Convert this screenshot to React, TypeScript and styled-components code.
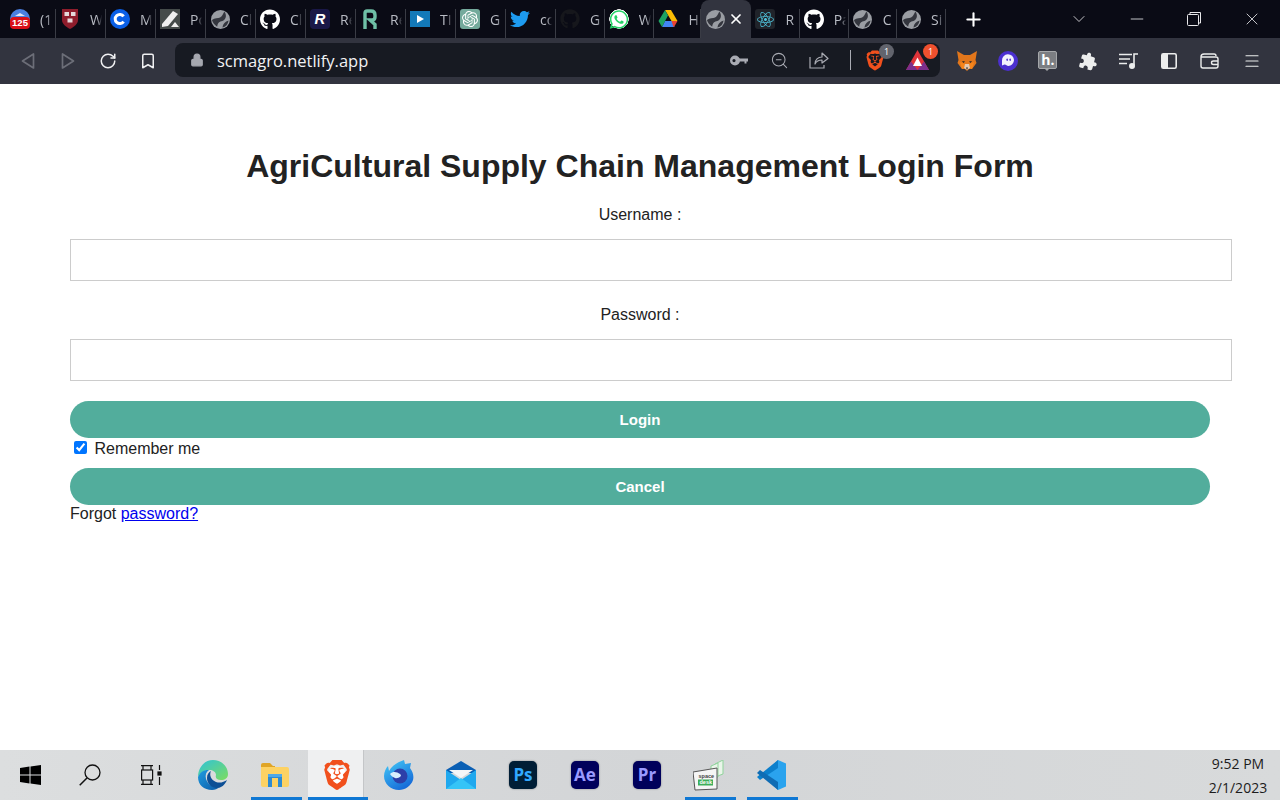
import React from "react";
import styled, { createGlobalStyle } from "styled-components";
import { FaGithub, FaTwitter, FaWhatsapp, FaReact } from "react-icons/fa";
import { SiOpenai, SiBrave } from "react-icons/si";
import { Bookmark, ChevronDown, Lock, Menu, Minus, Plus, RotateCw, X, ZoomOut } from "lucide-react";

const GlobalStyle = createGlobalStyle`
  html, body { margin: 0; padding: 0; background: #fff; }
  body { font-family: "Liberation Sans", Arial, sans-serif; color: #222; overflow: hidden; }
`;

const Screen = styled.div`
  width: 1280px;
  height: 800px;
  display: flex;
  flex-direction: column;
  overflow: hidden;
`;

/* browser chrome */
const TabStrip = styled.div`
  height: 38px;
  flex: none;
  display: flex;
  padding-left: 6px;
  background: #0a0b15;
`;

const Tab = styled.div<{ $w: number; $active?: boolean }>`
  width: ${(p) => p.$w}px;
  flex: none;
  box-sizing: border-box;
  position: relative;
  display: flex;
  align-items: center;
  gap: 10px;
  padding: 0 4px;
  overflow: hidden;
  background: ${(p) => (p.$active ? "#32343f" : "transparent")};
  border-radius: ${(p) => (p.$active ? "8px 8px 0 0" : "0")};
  &::after {
    content: "";
    display: ${(p) => (p.$active ? "none" : "block")};
    position: absolute;
    right: 0;
    top: 9px;
    bottom: 0;
    width: 1px;
    background: #3a3c45;
  }
`;

const TabIcon = styled.span`
  width: 20px;
  height: 20px;
  flex: none;
  display: flex;
  align-items: center;
  justify-content: center;
  position: relative;
`;

const TabTitle = styled.span`
  font: 14px "Open Sans", sans-serif;
  color: #b9bcc4;
  white-space: nowrap;
  overflow: hidden;
  width: 12px;
  flex: none;
  mask-image: linear-gradient(90deg, #000 60%, transparent 100%);
`;

const TabClose = styled.span`
  display: flex;
  color: #fff;
  margin-left: -7px;
`;

const StripActions = styled.div`
  flex: 1;
  display: flex;
  align-items: center;
  color: #fff;
`;

const NewTab = styled.span`
  display: flex;
  margin-left: 17px;
  margin-right: 81px;
`;

const WindowButton = styled.span<{ $w: number }>`
  width: ${(p) => p.$w}px;
  display: flex;
  justify-content: center;
  color: #e8e8ea;
`;

const Toolbar = styled.div`
  height: 46px;
  flex: none;
  box-sizing: border-box;
  display: flex;
  align-items: center;
  padding-left: 8px;
  background: #32343f;
`;

const NavButton = styled.span<{ $off?: boolean }>`
  width: 40px;
  flex: none;
  display: flex;
  justify-content: center;
  color: ${(p) => (p.$off ? "#6c6e78" : "#f0f0f2")};
`;

const AddressBar = styled.div`
  width: 765px;
  height: 34px;
  flex: none;
  margin-left: 7px;
  margin-top: -2px;
  box-sizing: border-box;
  display: flex;
  align-items: center;
  padding-left: 15px;
  background: #171a22;
  border-radius: 8px;
  color: #a6a8b0;
`;

const Url = styled.span`
  margin-left: 13px;
  font: 16.5px "Open Sans", sans-serif;
  color: #f1f2f4;
`;

const AddressActions = styled.div`
  margin-left: auto;
  display: flex;
  align-items: center;
`;

const AddressIcon = styled.span`
  width: 40px;
  display: flex;
  justify-content: center;
  color: #a9abb3;
`;

const Divider = styled.span`
  width: 1px;
  height: 20px;
  margin: 0 14px 0 11px;
  background: #a9abb3;
`;

const Shield = styled.span<{ $gap?: number }>`
  position: relative;
  width: ${(p) => (p.$gap ? 24 : 20)}px;
  height: 22px;
  margin-left: ${(p) => p.$gap ?? 0}px;
  margin-right: ${(p) => (p.$gap ? 11 : 0)}px;
  display: flex;
  align-items: center;
  justify-content: center;
`;

const Badge = styled.span<{ $bg: string }>`
  position: absolute;
  top: -5px;
  right: -9px;
  width: 15px;
  height: 15px;
  border-radius: 50%;
  background: ${(p) => p.$bg};
  color: #fff;
  font: 9px/15px "Open Sans", sans-serif;
  text-align: center;
`;

const Extensions = styled.div`
  margin-left: 7px;
  display: grid;
  grid-template-columns: repeat(8, 40.4px);
  justify-items: center;
  align-items: center;
  color: #eceded;
`;

const MenuButton = styled.span`
  display: flex;
  margin-left: 4px;
`;

/* the page itself */
const Page = styled.main`
  flex: 1;
  background: #fff;
`;

const Title = styled.h1`
  margin: 64px 0 0;
  font-size: 32px;
  line-height: 37px;
  font-weight: 700;
  text-align: center;
  color: #222;
`;

const Form = styled.form`
  width: 1140px;
  margin: 0 auto;
  font-size: 16px;
  line-height: 18px;
`;

const FieldLabel = styled.label<{ $top: number }>`
  display: block;
  margin-top: ${(p) => p.$top}px;
  text-align: center;
  color: #222;
`;

const TextInput = styled.input`
  display: block;
  width: 100%;
  height: 20px;
  margin-top: 15px;
  padding: 10px;
  border: 1px solid #ccc;
  background: #fff;
  outline: none;
`;

const SubmitButton = styled.button<{ $top: number }>`
  display: block;
  width: 100%;
  height: 37px;
  margin-top: ${(p) => p.$top}px;
  border: 0;
  border-radius: 19px;
  background: #52ad9c;
  color: #fff;
  font: bold 15px "Liberation Sans", Arial, sans-serif;
`;

const RememberRow = styled.label`
  display: block;
  line-height: 20px;
  color: #222;
  input {
    vertical-align: 0;
    margin: 3px 3px 3px 4px;
  }
`;

const ForgotRow = styled.div`
  color: #222;
  a { color: #0000ee; }
`;

/* taskbar */
const Taskbar = styled.footer`
  height: 50px;
  flex: none;
  display: flex;
  background: linear-gradient(90deg, #dcdedf 0%, #d3d5d7 50%, #d8dadb 100%);
`;

const TaskCell = styled.div<{ $w?: number; $open?: boolean; $active?: boolean }>`
  width: ${(p) => p.$w ?? 62}px;
  flex: none;
  position: relative;
  display: flex;
  align-items: center;
  justify-content: center;
  ${(p) =>
    p.$active &&
    `&::before {
      content: "";
      position: absolute;
      left: 2px;
      right: 4px;
      top: 0;
      bottom: 0;
      background: #eff0f1;
      border-right: 1px solid #c4c6c8;
    }`}
  ${(p) =>
    p.$open &&
    `&::after {
      content: "";
      position: absolute;
      left: ${p.$active ? 2 : 7}px;
      right: ${p.$active ? 0 : 4}px;
      bottom: 0;
      height: 3px;
      background: #0f78d4;
    }`}
  & > * { position: relative; z-index: 1; }
`;

const Clock = styled.div`
  margin-left: auto;
  width: 76px;
  padding-right: 4px;
  display: flex;
  flex-direction: column;
  align-items: center;
  gap: 6px;
  padding-top: 5px;
  font: 14px/18px "Open Sans", sans-serif;
  color: #1c1c1c;
`;

const AppSquare = styled.span<{ $bg: string; $fg: string }>`
  width: 28px;
  height: 28px;
  box-sizing: border-box;
  border-radius: 5px;
  background: ${(p) => p.$bg};
  color: ${(p) => p.$fg};
  box-shadow: 0 0 2px rgba(0, 0, 0, 0.4);
  font: 700 17px/27px "Open Sans", sans-serif;
  text-align: center;
`;

const MailBadge = styled.span`
  position: absolute;
  left: 0;
  right: 0;
  bottom: 0;
  height: 12px;
  border-radius: 4px;
  background: #d90f17;
  color: #fff;
  font: 700 9.5px/12px "Liberation Sans", sans-serif;
  text-align: center;
`;

const RepoSquare = styled.span`
  width: 20px;
  height: 20px;
  border-radius: 4px;
  background: #1a1848;
  color: #fff;
  font: italic 700 15px/20px "Liberation Sans", sans-serif;
  text-align: center;
`;

const ChatSquare = styled.span`
  width: 20px;
  height: 20px;
  border-radius: 3px;
  background: #74aa9c;
  display: flex;
  align-items: center;
  justify-content: center;
`;

const ReactSquare = styled.span`
  width: 20px;
  height: 20px;
  border-radius: 3px;
  background: #20232a;
  display: flex;
  align-items: center;
  justify-content: center;
`;

const WhatsAppBox = styled.span`
  width: 20px;
  height: 20px;
  display: flex;
  align-items: center;
  justify-content: center;
  border-radius: 50%;
  background: radial-gradient(circle, #fff 68%, transparent 70%);
`;

const BraveBox = styled.span`
  width: 30px;
  height: 30px;
  display: flex;
  align-items: center;
  justify-content: center;
  background: radial-gradient(circle, #fff 40%, transparent 45%);
`;

const HoneyLogo = styled.span`
  width: 17px;
  height: 16px;
  margin-top: -2px;
  border-radius: 2px;
  border: 1px solid #a5a7aa;
  background: #7c7e83;
  color: #fff;
  font: 700 14px/15px "Open Sans", sans-serif;
  text-align: center;
  position: relative;
  &::after {
    content: "";
    position: absolute;
    left: 6px;
    bottom: -5px;
    border: 2px solid transparent;
    border-top-color: #a5a7aa;
  }
`;

const Globe = () => (
  <svg width="19" height="19" viewBox="0 0 20 20">
    <circle cx="10" cy="10" r="10" fill="#9a9da3" />
    <path d="M14 1.5 C12 5 12 6.5 9.5 8 C7.5 9 4 8.5 1 10.5 C1.5 13 4 16 6.5 17.5 C7 13.5 9 12 12 11.5 C15 10.5 17.5 6 14 1.5 Z" fill="#34363e" />
    <path d="M18.5 11 C15 12 12.5 14.5 12 18.5 C15.5 17.5 18 15 18.5 11 Z" fill="#34363e" />
  </svg>
);

const Drive = () => (
  <svg width="20" height="18" viewBox="0 0 20 18">
    <path d="M7 0 H13 L19.5 11 H13.5 Z" fill="#fbbc04" />
    <path d="M4 17 L7 11 H15 L16.5 17 Z" fill="#4285f4" />
    <path d="M13.5 11 H19.5 L16 17 H15.5 Z" fill="#ea4335" />
    <path d="M7 0 L10 5.5 L4 17 L0.5 11 Z" fill="#1ea362" />
  </svg>
);

type TabData = { icon: React.ReactNode; title: string; w: number };

const tabs: TabData[] = [
  {
    w: 50,
    title: "(1",
    icon: (
      <>
        <svg width="20" height="20" viewBox="0 0 20 20">
          <circle cx="10" cy="10" r="10" fill="#4a7fe0" />
          <path d="M5 7 L10 4 L15 7 Z" fill="#dfe6f5" />
        </svg>
        <MailBadge>125</MailBadge>
      </>
    ),
  },
  {
    w: 50,
    title: "W",
    icon: (
      <svg width="16" height="20" viewBox="0 0 16 20">
        <path d="M0 0 H16 V11 C16 15 12 18 8 20 C4 18 0 15 0 11 Z" fill="#8f1d2c" />
        <rect x="2.5" y="3" width="4.5" height="4" fill="#e6d9da" />
        <rect x="9" y="3" width="4.5" height="4" fill="#e6d9da" />
        <rect x="5.5" y="9.5" width="5" height="4" fill="#e6d9da" />
      </svg>
    ),
  },
  {
    w: 50,
    title: "M",
    icon: (
      <svg width="20" height="20" viewBox="0 0 20 20">
        <circle cx="10" cy="10" r="10" fill="#0a5fe6" />
        <path d="M13.6 7.4 A4.6 4.6 0 1 0 13.6 12.6" fill="none" stroke="#fff" strokeWidth="3" />
      </svg>
    ),
  },
  {
    w: 50,
    title: "Po",
    icon: (
      <svg width="20" height="20" viewBox="0 0 20 20">
        <rect width="20" height="20" fill="#454b4a" />
        <path d="M2 15 L13 2 L18 5 L8 17 L2 18 Z" fill="#efefef" />
        <path d="M11 18 L15 13 L19 18 Z" fill="#efefef" />
      </svg>
    ),
  },
  { w: 50, title: "Cl", icon: <Globe /> },
  { w: 50, title: "Cl", icon: <FaGithub size={21} color="#fff" /> },
  { w: 50, title: "Re", icon: <RepoSquare>R</RepoSquare> },
  {
    w: 50,
    title: "Re",
    icon: (
      <svg width="16" height="20" viewBox="0 0 16 20">
        <path d="M3 20 V4 Q3 2 5 2 H9 Q13 2 13 6 V8 Q13 11 10 11 H8 L13 15.5 V20" fill="none" stroke="#6fc0a6" strokeWidth="3.4" />
      </svg>
    ),
  },
  {
    w: 50,
    title: "TI",
    icon: (
      <svg width="20" height="16" viewBox="0 0 20 16">
        <rect width="20" height="16" fill="#1379b8" />
        <path d="M7 4 L14 8 L7 12 Z" fill="#fff" />
      </svg>
    ),
  },
  {
    w: 50,
    title: "G",
    icon: (
      <ChatSquare>
        <SiOpenai size={16} color="#fff" />
      </ChatSquare>
    ),
  },
  { w: 50, title: "cc", icon: <FaTwitter size={20} color="#1d9bf0" /> },
  { w: 48.7, title: "G", icon: <FaGithub size={20} color="#16171c" /> },
  {
    w: 49.7,
    title: "W",
    icon: (
      <WhatsAppBox>
        <FaWhatsapp size={21} color="#25d366" />
      </WhatsAppBox>
    ),
  },
  { w: 47, title: "H", icon: <Drive /> },
];

const tabsAfter: TabData[] = [
  {
    w: 48.3,
    title: "R",
    icon: (
      <ReactSquare>
        <FaReact size={17} color="#4fc3dc" />
      </ReactSquare>
    ),
  },
  { w: 49, title: "Pa", icon: <FaGithub size={21} color="#fff" /> },
  { w: 48.4, title: "C", icon: <Globe /> },
  { w: 49, title: "Si", icon: <Globe /> },
];

const KeyIcon = () => (
  <svg width="18" height="11" viewBox="0 0 18 11" fill="#a9abb3">
    <path fillRule="evenodd" d="M5 0.5 A5 5 0 1 1 5 10.5 A5 5 0 0 1 5 0.5 Z M4 4 A1.6 1.6 0 1 0 4 7.2 A1.6 1.6 0 0 0 4 4 Z" />
    <path d="M8 3.5 H18 V6.5 H16.5 V8.5 H14.5 V6.5 H8 Z" />
  </svg>
);

const ShareIcon = () => (
  <svg width="20" height="18" viewBox="0 0 20 18" fill="none" stroke="#a9abb3" strokeWidth="1.2">
    <path d="M1 6 V17 H15 V14" />
    <path d="M6 13 C6 8.5 9 6 13 6 V2 L19 7.5 L13 12 V9 C10 9 7.5 10 6 13 Z" strokeLinejoin="round" />
  </svg>
);

const MetaMask = () => (
  <svg width="22" height="20" viewBox="0 0 22 20">
    <path d="M1 0 L8 4 H14 L21 0 L19.5 9 L20.5 12 L16 18 H13 L11 20 L9 18 H6 L1.5 12 L2.5 9 Z" fill="#e2761b" />
    <path d="M4 11 L9 13 L8 17 L6 18 Z M18 11 L13 13 L14 17 L16 18 Z" fill="#f6851b" />
    <path d="M9 13 H13 L14 17 L11 19 L8 17 Z" fill="#e4c9b0" />
    <path d="M10 16.5 H12 L11 19 Z" fill="#26272b" />
    <path d="M6 10 L9 10.5 L7.5 12 Z M16 10 L13 10.5 L14.5 12 Z" fill="#26272b" />
  </svg>
);

const Phantom = () => (
  <svg width="20" height="20" viewBox="0 0 20 20">
    <circle cx="10" cy="10" r="10" fill="#4b2fd0" />
    <path d="M4 14.5 V9.5 A6 6 0 0 1 16 9 C16 12 13 15 10.5 15 C8.5 15 8.5 13.5 6.5 13.5 C5.5 13.5 5 14.5 4 14.5 Z" fill="#f3f2fd" />
    <rect x="8.5" y="7.5" width="1.4" height="2.4" rx="0.7" fill="#4b2fd0" />
    <rect x="11.5" y="7.5" width="1.4" height="2.4" rx="0.7" fill="#4b2fd0" />
  </svg>
);

const PuzzleIcon = () => (
  <svg width="19" height="19" viewBox="0 0 24 24" fill="#eceded">
    <path
      transform="rotate(15 12 12)"
      d="M20.5 11H19V7c0-1.1-.9-2-2-2h-4V3.5C13 2.12 11.88 1 10.5 1S8 2.12 8 3.5V5H4c-1.1 0-1.99.9-1.99 2v3.8H3.5c1.49 0 2.7 1.21 2.7 2.7s-1.21 2.7-2.7 2.7H2V20c0 1.1.9 2 2 2h3.8v-1.5c0-1.49 1.21-2.7 2.7-2.7 1.49 0 2.7 1.21 2.7 2.7V22H17c1.1 0 2-.9 2-2v-4h1.5c1.38 0 2.5-1.12 2.5-2.5S21.88 11 20.5 11z"
    />
  </svg>
);

const MusicQueue = () => (
  <svg width="20" height="16" viewBox="0 0 20 16" fill="none" stroke="#eceded" strokeWidth="1.6">
    <path d="M0 1.5 H13 M0 6 H11 M0 10.5 H8" />
    <path d="M15 12.5 V1 H19" />
    <circle cx="13" cy="13" r="2.2" fill="#eceded" />
  </svg>
);

const SidebarIcon = () => (
  <svg width="16" height="16" viewBox="0 0 16 16" fill="none">
    <rect x="0.8" y="0.8" width="14.4" height="14.4" rx="1.5" stroke="#eceded" strokeWidth="1.6" />
    <rect x="1" y="1" width="6" height="14" fill="#eceded" />
  </svg>
);

const WalletIcon = () => (
  <svg width="19" height="16" viewBox="0 0 19 16" fill="none" stroke="#eceded" strokeWidth="1.4">
    <path d="M1 4 Q1 1 4 1 H14 Q16 1 16 3" />
    <path d="M1 4 V13 Q1 15 3 15 H16 Q18 15 18 13 V6 Q18 4 16 4 H1" />
    <path d="M18 8 H13.5 Q11.5 8 11.5 9.7 Q11.5 11.5 13.5 11.5 H18" />
  </svg>
);

const BatIcon = () => (
  <svg width="23" height="20" viewBox="0 0 23 20">
    <path d="M11.5 0 L23 20 H0 Z" fill="#e0343a" />
    <path d="M0 20 L5 11.5 L11.5 20 Z" fill="#7c2e8c" />
    <path d="M23 20 L18 11.5 L11.5 20 Z" fill="#7c2e8c" />
    <path d="M11.5 7.5 L16 16 H7 Z" fill="#fff" />
  </svg>
);

const WindowsLogo = () => (
  <svg width="21" height="20" viewBox="0 0 21 20" fill="#000">
    <path d="M0 3 L9.5 1.6 V9.5 H0 Z M10.5 1.4 L21 0 V9.5 H10.5 Z M0 10.5 H9.5 V18.4 L0 17 Z M10.5 10.5 H21 V20 L10.5 18.6 Z" />
  </svg>
);

const TaskSearch = () => (
  <svg width="22" height="22" viewBox="0 0 22 22" fill="none" stroke="#111" strokeWidth="1.3">
    <circle cx="13.5" cy="8.5" r="7.5" />
    <path d="M8 14 L0.7 21.3" strokeWidth="1.5" />
  </svg>
);

const TaskView = () => (
  <svg width="21" height="20" viewBox="0 0 21 20" fill="none" stroke="#111" strokeWidth="1.2">
    <path d="M0 0.6 H12 M0 19.4 H12" />
    <rect x="0.6" y="5" width="11" height="10" />
    <path d="M2 0.6 V5 M10 0.6 V5 M2 15 V19.4 M10 15 V19.4" />
    <path d="M18.5 0 V5 M18.5 12 V20" />
    <rect x="17" y="7" width="3" height="3" fill="#111" />
  </svg>
);

const Edge = () => (
  <svg width="30" height="30" viewBox="0 0 30 30">
    <defs>
      <linearGradient id="edgeA" x1="0" y1="0" x2="1" y2="1">
        <stop offset="0" stopColor="#2fc3d8" />
        <stop offset="1" stopColor="#7ddc5f" />
      </linearGradient>
      <linearGradient id="edgeB" x1="0" y1="0" x2="1" y2="1">
        <stop offset="0" stopColor="#1f9be0" />
        <stop offset="1" stopColor="#0c5aa6" />
      </linearGradient>
    </defs>
    <path d="M15 0 C23 0 30 6 30 14 C30 18 27 20 23 20 C19 20 17 18 18 15 C18 12 15 10 11 10 C6 10 2 13 0 17 C0 8 6 0 15 0 Z" fill="url(#edgeA)" />
    <path d="M0 17 C2 12 6 9.5 11 10 C8 12 7 15 8 19 C10 25 16 28 22 27 C19 29 17 30 14 30 C6 30 0 25 0 17 Z" fill="url(#edgeB)" />
    <path d="M9 18 C9 14 11 12 13 11 C11 15 13 20 18 22 C22 23.5 26 22 29 20 C27 25 23 28 19 28 C14 28 9 24 9 18 Z" fill="#0d4f95" />
  </svg>
);

const Explorer = () => (
  <svg width="28" height="24" viewBox="0 0 28 24">
    <path d="M0 2 Q0 0 2 0 H9 L12 3 H14 V8 H0 Z" fill="#e0a526" />
    <path d="M0 4 H26 Q28 4 28 6 V22 Q28 24 26 24 H2 Q0 24 0 22 Z" fill="#fdd263" />
    <path d="M7 11 H21 V24 H17 V15 H11 V24 H7 Z" fill="#2d8ad2" />
    <rect x="7" y="11" width="14" height="3" fill="#4fa8e8" />
  </svg>
);

const Firefox = () => (
  <svg width="30" height="30" viewBox="0 0 30 30">
    <defs>
      <linearGradient id="foxA" x1="0.2" y1="0" x2="0.8" y2="1">
        <stop offset="0" stopColor="#41c4f5" />
        <stop offset="1" stopColor="#1263d6" />
      </linearGradient>
    </defs>
    <path d="M15 2 L20 0 L21 4 L27 3 L26 8 C29 12 30 16 29 20 C27 26 21 30 15 30 C7 30 0 24 0 16 C0 12 2 8 4 6 L5 11 C7 7 11 4 15 2 Z" fill="url(#foxA)" />
    <circle cx="16" cy="16" r="7.5" fill="#2d3fa8" />
    <path d="M6 14 C9 11 13 12 16 14 C19 16 14 19 11 18 C9 17 7 16 6 14 Z" fill="#d8effc" />
  </svg>
);

const Mail = () => (
  <svg width="30" height="28" viewBox="0 0 30 28">
    <path d="M15 0 L30 9 V12 H0 V9 Z" fill="#0a5fb4" />
    <path d="M3 9 H27 L15 17 Z" fill="#f4f6f8" />
    <path d="M0 9 L15 19 L30 9 V28 H0 Z" fill="#1fa8ee" />
    <path d="M0 28 L15 17 L30 28 Z" fill="#35c4f7" />
  </svg>
);

const SpaceDesk = () => (
  <svg width="32" height="31" viewBox="0 0 32 31">
    <path d="M22 4 L30 0 V14 L22 17 Z" fill="#eaf5ea" stroke="#8fd39b" />
    <path d="M18 6 L25 3 V17 L18 19 Z" fill="#eaf5ea" stroke="#8fd39b" />
    <path d="M0 12 L24 8 V29 L2 30 Z" fill="#f5f5f5" stroke="#555" strokeWidth="1" />
    <rect x="5" y="19.5" width="15" height="6" fill="#3cae59" />
    <text x="5.5" y="17.5" fontSize="5.5" fontWeight="700" fontFamily="Liberation Sans, sans-serif" fill="#444">space</text>
    <text x="6.5" y="24.3" fontSize="5.5" fontWeight="700" fontFamily="Liberation Sans, sans-serif" fill="#fff">desk</text>
  </svg>
);

const VSCode = () => (
  <svg width="30" height="30" viewBox="0 0 30 30">
    <path d="M22 0 L30 3.5 V26.5 L22 30 L7 16 L11 11 Z" fill="#2aa3ee" />
    <path d="M22 0 L1 17 L4 20 L22 8 Z" fill="#0b7fcc" />
    <path d="M22 30 L1 13 L4 10 L22 22 Z" fill="#0f6cb4" />
  </svg>
);

const TabRow = ({ tab }: { tab: TabData }) => (
  <Tab $w={tab.w}>
    <TabIcon>{tab.icon}</TabIcon>
    <TabTitle>{tab.title}</TabTitle>
  </Tab>
);

const App = () => {
  return (
    <Screen>
      <GlobalStyle />
      <TabStrip>
        {tabs.map((tab, i) => (
          <TabRow key={i} tab={tab} />
        ))}
        <Tab $w={50} $active>
          <TabIcon>
            <Globe />
          </TabIcon>
          <TabClose>
            <X size={16} strokeWidth={2.6} />
          </TabClose>
        </Tab>
        {tabsAfter.map((tab, i) => (
          <TabRow key={i} tab={tab} />
        ))}
        <StripActions>
          <NewTab>
            <Plus size={21} strokeWidth={2.4} />
          </NewTab>
          <WindowButton $w={28}>
            <ChevronDown size={20} strokeWidth={1} />
          </WindowButton>
          <WindowButton $w={88}>
            <Minus size={20} strokeWidth={1} />
          </WindowButton>
          <WindowButton $w={25}>
            <svg width="14" height="14" viewBox="0 0 14 14" fill="none" stroke="#e8e8ea">
              <rect x="0.5" y="2.5" width="11" height="11" rx="1" />
              <path d="M3 2.5 V0.5 H13.5 V11 H11.5" />
            </svg>
          </WindowButton>
          <WindowButton $w={91}>
            <X size={20} strokeWidth={1} />
          </WindowButton>
        </StripActions>
      </TabStrip>

      <Toolbar>
        <NavButton $off>
          <svg width="14" height="18" viewBox="0 0 14 18" fill="none" stroke="currentColor" strokeWidth="1.7">
            <path d="M12.5 2 V16 L1.5 9 Z" strokeLinejoin="round" />
          </svg>
        </NavButton>
        <NavButton $off>
          <svg width="14" height="18" viewBox="0 0 14 18" fill="none" stroke="currentColor" strokeWidth="1.7">
            <path d="M1.5 2 V16 L12.5 9 Z" strokeLinejoin="round" />
          </svg>
        </NavButton>
        <NavButton>
          <RotateCw size={18} strokeWidth={2} />
        </NavButton>
        <NavButton>
          <Bookmark size={18} strokeWidth={2} />
        </NavButton>
        <AddressBar>
          <Lock size={14} fill="#a6a8b0" strokeWidth={2} />
          <Url>scmagro.netlify.app</Url>
          <AddressActions>
            <AddressIcon>
              <KeyIcon />
            </AddressIcon>
            <AddressIcon>
              <ZoomOut size={19} strokeWidth={1.3} />
            </AddressIcon>
            <AddressIcon>
              <ShareIcon />
            </AddressIcon>
            <Divider />
            <Shield>
              <SiBrave size={21} color="#f1501d" />
              <Badge $bg="#62646d">1</Badge>
            </Shield>
            <Shield $gap={20}>
              <BatIcon />
              <Badge $bg="#f0502e">1</Badge>
            </Shield>
          </AddressActions>
        </AddressBar>
        <Extensions>
          <MetaMask />
          <Phantom />
          <HoneyLogo>h.</HoneyLogo>
          <PuzzleIcon />
          <MusicQueue />
          <SidebarIcon />
          <WalletIcon />
          <MenuButton>
            <Menu size={18} strokeWidth={1.6} />
          </MenuButton>
        </Extensions>
      </Toolbar>

      <Page>
        <Title>AgriCultural Supply Chain Management Login Form</Title>
        <Form onSubmit={(e) => e.preventDefault()}>
          <FieldLabel $top={21} htmlFor="username">
            Username :
          </FieldLabel>
          <TextInput id="username" type="text" />
          <FieldLabel $top={25} htmlFor="password">
            Password :
          </FieldLabel>
          <TextInput id="password" type="password" />
          <SubmitButton $top={20} type="submit">
            Login
          </SubmitButton>
          <RememberRow>
            <input type="checkbox" defaultChecked /> Remember me
          </RememberRow>
          <SubmitButton $top={9} type="button">
            Cancel
          </SubmitButton>
          <ForgotRow>
            Forgot <a href="#password">password?</a>
          </ForgotRow>
        </Form>
      </Page>

      <Taskbar>
        <TaskCell $w={60}>
          <WindowsLogo />
        </TaskCell>
        <TaskCell $w={60}>
          <TaskSearch />
        </TaskCell>
        <TaskCell $w={62}>
          <TaskView />
        </TaskCell>
        <TaskCell>
          <Edge />
        </TaskCell>
        <TaskCell $open>
          <Explorer />
        </TaskCell>
        <TaskCell $open $active>
          <BraveBox>
            <SiBrave size={30} color="#f1501d" />
          </BraveBox>
        </TaskCell>
        <TaskCell>
          <Firefox />
        </TaskCell>
        <TaskCell>
          <Mail />
        </TaskCell>
        <TaskCell>
          <AppSquare $bg="#001e36" $fg="#31a8ff">Ps</AppSquare>
        </TaskCell>
        <TaskCell>
          <AppSquare $bg="#00005b" $fg="#9999ff">Ae</AppSquare>
        </TaskCell>
        <TaskCell>
          <AppSquare $bg="#00005b" $fg="#9999ff">Pr</AppSquare>
        </TaskCell>
        <TaskCell $open>
          <SpaceDesk />
        </TaskCell>
        <TaskCell $open>
          <VSCode />
        </TaskCell>
        <Clock>
          <span>9:52 PM</span>
          <span>2/1/2023</span>
        </Clock>
      </Taskbar>
    </Screen>
  );
};

export default App;
